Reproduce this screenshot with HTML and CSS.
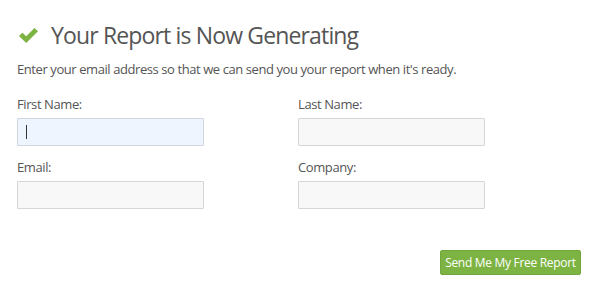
FILE: index.html
```html
<!DOCTYPE html>
<html lang="en">
<head>
    <meta charset="UTF-8">
    <meta name="viewport" content="width=device-width, initial-scale=1.0">
    <title>Your Report is Now Generating</title>
    <link rel="stylesheet" href="styles.css">
</head>
<body>
    <div class="container">
        <h1 class="title">
            <svg class="check" width="21" height="17" viewBox="0 0 21 17" aria-hidden="true">
                <path d="M1 9 L4.4 5.7 L8.2 9.3 L16.5 1 L20 4.3 L8.2 16 Z" fill="#7cb342"/>
            </svg>
            Your Report is Now Generating
        </h1>
        <p class="intro">Enter your email address so that we can send you your report when it's ready.</p>

        <form class="report-form" onsubmit="return false">
            <div class="fields">
                <div class="field">
                    <label for="firstName">First Name:</label>
                    <input type="text" id="firstName" class="focused">
                </div>
                <div class="field">
                    <label for="lastName">Last Name:</label>
                    <input type="text" id="lastName">
                </div>
                <div class="field">
                    <label for="email">Email:</label>
                    <input type="text" id="email">
                </div>
                <div class="field">
                    <label for="company">Company:</label>
                    <input type="text" id="company">
                </div>
            </div>
            <div class="form-actions">
                <button type="submit">Send Me My Free Report</button>
            </div>
        </form>
    </div>
</body>
</html>
```

FILE: styles.css
```css
body {
    font-family: 'Open Sans', 'Liberation Sans', sans-serif;
    margin: 0;
    padding: 0;
    background: #ffffff;
    color: #555555;
}
.container {
    padding: 20px 19px 0 17px;
}
.title {
    display: flex;
    align-items: center;
    gap: 12px;
    margin: 0;
    font-size: 23px;
    font-weight: 400;
    color: #555555;
    line-height: 30px;
    letter-spacing: -0.85px;
}
.check {
    margin-left: 1px;
    flex: none;
}
.intro {
    margin: 10px 0 0;
    font-size: 13px;
    line-height: 18px;
    color: #555555;
    letter-spacing: -0.42px;
}
.report-form {
    margin-top: 17px;
}
.fields {
    display: grid;
    grid-template-columns: 187px 187px;
    column-gap: 94px;
    row-gap: 12px;
}
.field label {
    display: block;
    font-size: 13px;
    line-height: 18px;
    margin-bottom: 5px;
    color: #555555;
    letter-spacing: -0.4px;
}
.field input {
    display: block;
    box-sizing: border-box;
    width: 187px;
    height: 28px;
    margin: 0;
    padding: 4px 8px;
    background: #f8f8f8;
    border: 1px solid #d6d6d6;
    border-radius: 1px;
    outline: none;
}
.field input.focused {
    background: #eef5fe;
    border-color: #cfd6de;
    background-image: linear-gradient(#333, #333);
    background-size: 1px 14px;
    background-position: 8px 6px;
    background-repeat: no-repeat;
}
.form-actions {
    display: flex;
    justify-content: flex-end;
    margin-top: 41px;
}
.form-actions button {
    height: 25px;
    width: 141px;
    padding: 0;
    font-family: inherit;
    font-size: 12px;
    letter-spacing: -0.3px;
    white-space: nowrap;
    color: #ffffff;
    background: #7cb342;
    border: 1px solid #72a83b;
    border-radius: 2px;
    cursor: pointer;
}
```
